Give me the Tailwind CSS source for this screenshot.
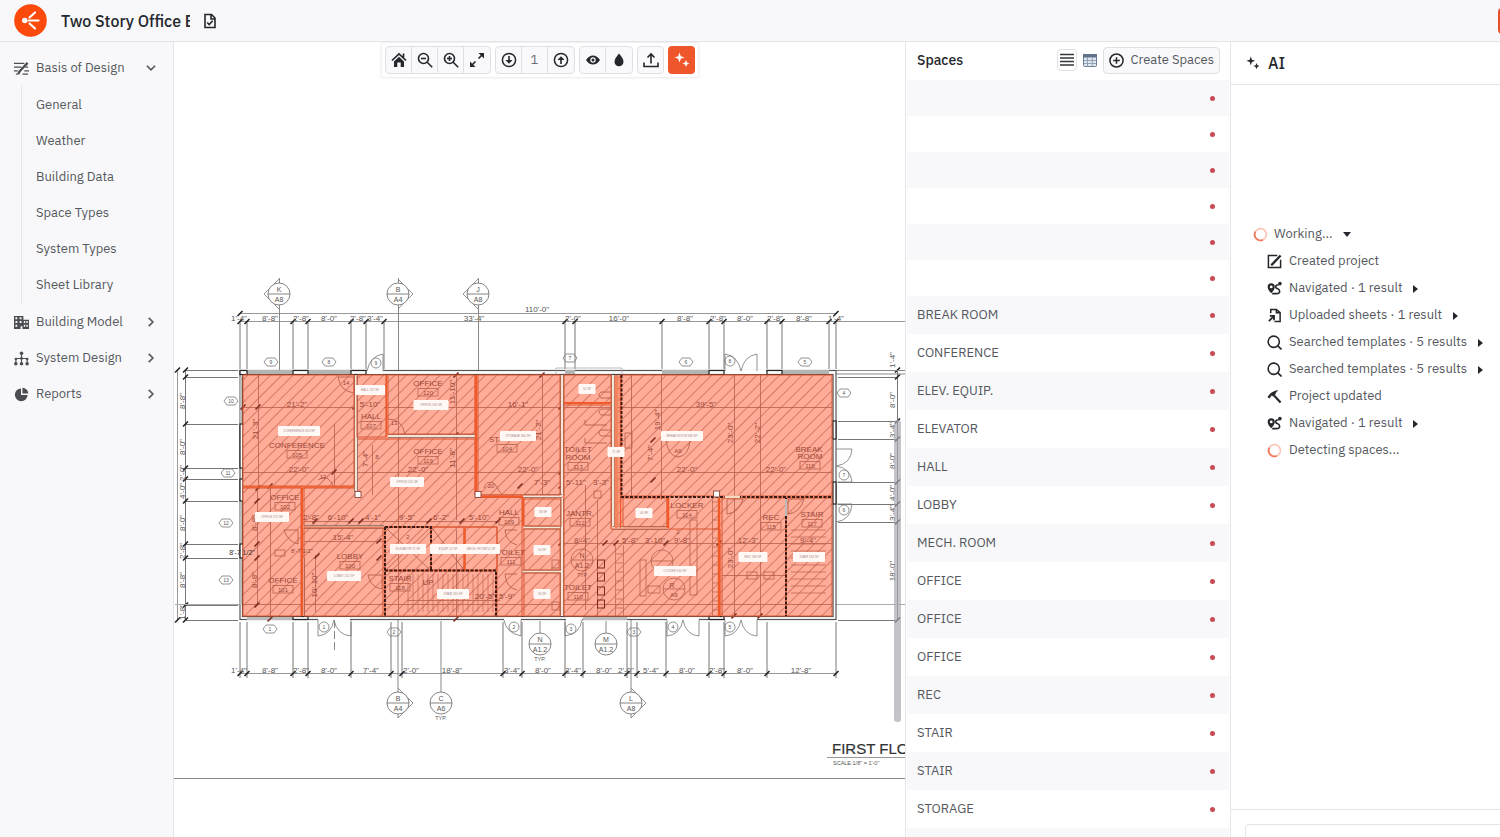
<!DOCTYPE html>
<html lang="en">
<head>
    <meta charset="UTF-8">
    <meta name="viewport" content="width=device-width, initial-scale=1.0">
    <title>Two Story Office Building</title>
    <script src="https://cdn.jsdelivr.net/npm/@tailwindcss/browser@4"></script>
    <style>
        body { font-family: 'IBM Plex Sans', Roboto, sans-serif; }
        #plan text { font-family: 'Liberation Sans', Arial, sans-serif; text-anchor: middle; }
    </style>
</head>
<body class="flex h-screen flex-col overflow-hidden bg-white text-sm text-[#55585e]">

    <!-- Icons -->
    <svg class="hidden">
        <symbol id="i-chevron" viewBox="0 0 16 16"><path d="M5 2.500 10.500 8 5 13.500" fill="none" stroke="currentColor" stroke-width="2.200"/></symbol>
        <symbol id="i-sparkles" viewBox="0 0 16 16"><path fill="currentColor" d="M5.500.5 6.800 4.200 10.500 5.500 6.800 6.800 5.500 10.500 4.200 6.800.5 5.500 4.200 4.200zM12 8l1 2.500 2.500 1-2.500 1-1 2.500-1-2.500-2.500-1 2.500-1z"/></symbol>
        <symbol id="i-search" viewBox="0 0 16 16"><g fill="none" stroke="currentColor" stroke-width="1.700"><circle cx="7.200" cy="7.200" r="6"/><path d="m11 11 4.500 4.500"/></g></symbol>
        <symbol id="i-zoom" viewBox="0 0 16 16"><g fill="none" stroke="currentColor" stroke-width="1.600"><circle cx="6.500" cy="6.500" r="5"/><path d="m10.200 10.200 5 5"/><path d="M4 6.500h5"/></g></symbol>
        <symbol id="i-route" viewBox="0 0 16 16"><path fill="currentColor" fill-rule="evenodd" d="M4.500 2.500A3.800 3.800 0 0 0 .7 6.300C.7 9 3 11.500 4.500 13c1.500-1.500 3.800-4 3.800-6.700a3.800 3.800 0 0 0-3.800-3.800zm0 2.300a1.500 1.500 0 1 1 0 3 1.500 1.500 0 0 1 0-3z"/><circle cx="13.800" cy="2.800" r="1.900" fill="currentColor"/><path d="M12.500 4c-4 0-4 3.500-1.500 4s4.500 5.500-1 5.500H5.500" fill="none" stroke="currentColor" stroke-width="1.700"/></symbol>
        <symbol id="i-spinner" viewBox="0 0 16 16"><circle cx="8" cy="8" r="6.300" fill="none" stroke="#fbc5b5" stroke-width="1.800"/><path d="M10.500 13.800A6.300 6.300 0 0 1 2.500 5" fill="none" stroke="#f0785a" stroke-width="1.800"/></symbol>
    </svg>

    <header class="flex h-[42px] shrink-0 items-center border-b border-[#e4e5e9] bg-[#f8f8fa]">
        <a href="#" aria-label="Home" class="ml-[14px]">
            <svg class="size-[33px]" viewBox="0 0 33 33"><circle cx="16.500" cy="16.500" r="16.300" fill="#fb4a0c"/><circle cx="10.800" cy="16.500" r="2.800" fill="#fff"/><path d="M15.500 13.500l5.500-5M15 16.500h9.500M15.500 19.500l5.500 5" stroke="#fff" stroke-width="2.200" stroke-linecap="round"/></svg>
        </a>
        <input aria-label="Project name" value="Two Story Office Building" class="ml-[14px] w-[129px] bg-transparent text-base font-medium text-[#24272c] outline-none">
        <button aria-label="Project files" class="ml-3 text-[#24272c]">
            <svg class="size-4" viewBox="0 0 16 16" fill="none" stroke="currentColor" stroke-width="1.600"><path d="M3 1.500h6.500L13 5v9.500H3zM9 1.500V6h4"/><path d="m5.200 9.500 2 2 3.500-3.700"/></svg>
        </button>
        <button aria-label="Share" class="-mr-7 ml-auto h-[26px] w-[30px] shrink-0 rounded bg-[#e8502a]"></button>
    </header>

    <div class="flex min-h-0 flex-1">
        <nav class="w-[174px] shrink-0 border-r border-[#e4e5e9] bg-[#f8f8fa] pt-2 text-[13px]">
            <button class="flex h-9 w-full items-center gap-[7px] pr-4 pl-[14px]">
                <svg class="size-[15px] text-[#4a4d52]" viewBox="0 0 16 16" fill="none" stroke="currentColor" stroke-width="1.500"><path d="M0 2.500h11M0 6.500h8M0 10.500h4M11 10.500h5M2 14h2M9 14h6M12 6.500h3"/><path d="m14.500 2-8.500 9-1.500 3" stroke-width="2.500"/></svg>
                Basis of Design
                <svg class="ml-auto size-3 rotate-90"><use href="#i-chevron"/></svg>
            </button>
            <ul class="ml-[21px] border-l border-[#e4e5e9] py-px">
                <li><a href="#" class="flex h-9 items-center pl-[14px]">General</a></li>
                <li><a href="#" class="flex h-9 items-center pl-[14px]">Weather</a></li>
                <li><a href="#" class="flex h-9 items-center pl-[14px]">Building Data</a></li>
                <li><a href="#" class="flex h-9 items-center pl-[14px]">Space Types</a></li>
                <li><a href="#" class="flex h-9 items-center pl-[14px]">System Types</a></li>
                <li><a href="#" class="flex h-9 items-center pl-[14px]">Sheet Library</a></li>
            </ul>
            <button class="flex h-9 w-full items-center gap-[7px] pr-4 pl-[14px]">
                <svg class="size-[15px] text-[#4a4d52]" viewBox="0 0 16 16"><path fill="currentColor" fill-rule="evenodd" d="M0 1h10v4h6v10H9v-3H7v3H0zM1.500 2.500v2h2v-2zM6 2.500v2h2v-2zM1.500 6.500v2h2v-2zM6 6.500v2h2v-2zM1.500 10.500v2h2v-2zM10.500 6.500v2h1.500v-2zM13.200 6.500v2h1.500v-2zM10.500 10.500v2h1.500v-2zM13.200 10.500v2h1.500v-2z"/></svg>
                Building Model
                <svg class="ml-auto size-3"><use href="#i-chevron"/></svg>
            </button>
            <button class="flex h-9 w-full items-center gap-[7px] pr-4 pl-[14px]">
                <svg class="size-[15px] text-[#4a4d52]" viewBox="0 0 16 16" fill="currentColor"><path d="M8 2v11M2 13V8h12v5" fill="none" stroke="currentColor" stroke-width="1.200"/><circle cx="8" cy="2.500" r="1.900"/><circle cx="2" cy="8.500" r="1.400"/><circle cx="14" cy="8.500" r="1.400"/><circle cx="8" cy="8" r="1.500"/><circle cx="1.900" cy="13.500" r="1.900"/><circle cx="8" cy="13.500" r="1.900"/><circle cx="14" cy="13.500" r="1.900"/></svg>
                System Design
                <svg class="ml-auto size-3"><use href="#i-chevron"/></svg>
            </button>
            <button class="flex h-9 w-full items-center gap-[7px] pr-4 pl-[14px]">
                <svg class="size-[15px] text-[#4a4d52]" viewBox="0 0 16 16" fill="currentColor"><path d="M7.500 1.500v7h7A6.800 6.800 0 1 1 7.500 1.500z"/><path d="M9 .8A6.500 6.500 0 0 1 15.200 7H9z"/></svg>
                Reports
                <svg class="ml-auto size-3"><use href="#i-chevron"/></svg>
            </button>
        </nav>

        <main class="relative min-w-0 flex-1 overflow-hidden">
            <svg id="plan" class="h-[795px] w-[731px]" viewBox="174 42 731 795" role="img" aria-label="First floor plan"></svg>

            <div class="absolute top-1 left-[211px] flex h-7 gap-1 text-[#24272c] shadow-[0_0_0_3px_#fff,0_0_2px_4px_#e9eaed]">
                <div class="flex divide-x divide-[#dfe0e4] rounded border border-[#dfe0e4] bg-[#f9f9fb]">
                    <button aria-label="Fit" class="flex w-[26px] items-center justify-center"><svg class="size-4" viewBox="0 0 16 16"><path d="M1 8.500 8 2l7 6.500M12.500 1.500v4" fill="none" stroke="currentColor" stroke-width="1.700"/><path d="M8 4.800 13 9.500V15H9.700v-4.500H6.300V15H3V9.500z" fill="currentColor"/></svg></button>
                    <button aria-label="Zoom out" class="flex w-[26px] items-center justify-center"><svg class="size-4"><use href="#i-zoom"/></svg></button>
                    <button aria-label="Zoom in" class="flex w-[26px] items-center justify-center"><svg class="size-4" viewBox="0 0 16 16"><use href="#i-zoom"/><path d="M6.500 4v5" stroke="currentColor" stroke-width="1.600"/></svg></button>
                    <button aria-label="Full screen" class="flex w-[26px] items-center justify-center"><svg class="size-4" viewBox="0 0 16 16" fill="currentColor"><path d="M9.500 1H15v5.500zM1 9.500V15h5.500z"/><path d="m13 3-3.500 3.500M6.500 9.500 3 13" stroke="currentColor" stroke-width="1.600"/></svg></button>
                </div>
                <div class="flex divide-x divide-[#dfe0e4] rounded border border-[#dfe0e4] bg-[#f9f9fb]">
                    <button aria-label="Previous sheet" class="flex w-[26px] items-center justify-center"><svg class="size-4" viewBox="0 0 16 16"><circle cx="8" cy="8" r="6.600" fill="none" stroke="currentColor" stroke-width="1.500"/><path d="M7.200 4h1.600v4h2.700L8 11.800 4.500 8h2.700z" fill="currentColor"/></svg></button>
                    <span class="flex w-[26px] items-center justify-center text-[13px] text-[#6a6d73]">1</span>
                    <button aria-label="Next sheet" class="flex w-[26px] items-center justify-center"><svg class="size-4 rotate-180" viewBox="0 0 16 16"><circle cx="8" cy="8" r="6.600" fill="none" stroke="currentColor" stroke-width="1.500"/><path d="M7.200 4h1.600v4h2.700L8 11.800 4.500 8h2.700z" fill="currentColor"/></svg></button>
                </div>
                <div class="flex divide-x divide-[#dfe0e4] rounded border border-[#dfe0e4] bg-[#f9f9fb]">
                    <button aria-label="Visibility" class="flex w-[26px] items-center justify-center"><svg class="size-4" viewBox="0 0 16 16"><path fill="currentColor" fill-rule="evenodd" d="M1 8c2-3 4.300-4.500 7-4.500S13 5 15 8c-2 3-4.300 4.500-7 4.500S3 11 1 8zm7-2.700a2.700 2.700 0 1 0 0 5.400 2.700 2.700 0 0 0 0-5.400z"/><circle cx="8" cy="8" r="1.500" fill="currentColor"/></svg></button>
                    <button aria-label="Opacity" class="flex w-[26px] items-center justify-center"><svg class="size-4" viewBox="0 0 16 16"><path fill="currentColor" d="M8 1.500c2 2.700 4.500 5.300 4.500 8.200a4.500 4.500 0 0 1-9 0C3.500 6.800 6 4.200 8 1.500z"/></svg></button>
                </div>
                <button aria-label="Upload" class="flex w-[27px] items-center justify-center rounded border border-[#dfe0e4] bg-[#f9f9fb]"><svg class="size-4" viewBox="0 0 16 16" fill="none" stroke="currentColor" stroke-width="1.600"><path d="M1 10.500v4h14v-4M8 11.500V2M4.500 5.500 8 2l3.500 3.500"/></svg></button>
                <button aria-label="AI detect" class="flex w-[27px] items-center justify-center rounded bg-[#f0562c] text-white"><svg class="size-4"><use href="#i-sparkles"/></svg></button>
            </div>
        </main>

        <section class="flex w-[326px] shrink-0 flex-col border-x border-[#e4e5e9]">
            <div class="flex h-[38px] shrink-0 items-center pr-[10px] pb-0.5 pl-[11px]">
                <h2 class="mr-auto text-sm font-medium text-[#24272c]">Spaces</h2>
                <button aria-label="List view" class="mr-[3px] flex h-[22px] w-5 items-center justify-center rounded-sm border border-[#dfe0e4] text-[#35383d]"><svg class="h-[14px] w-[14px]" viewBox="0 0 14 14"><path d="M0 1.500h14M0 5h14M0 8.500h14M0 12h14" stroke="currentColor" stroke-width="1.600"/></svg></button>
                <button aria-label="Table view" class="mr-[3px] flex h-[22px] w-5 items-center justify-center"><svg class="h-[13px] w-[14px]" viewBox="0 0 14 13"><rect x=".5" y=".5" width="13" height="12" rx="1" fill="#dfe6ef" stroke="#6d7f97"/><path d="M0 0h14v3.500H0z" fill="#61738c"/><path d="M4.500 3v9.500M9.300 3v9.500M1 6.500h12M1 9.500h12" stroke="#8c9cb2" stroke-width=".9"/></svg></button>
                <button class="flex h-[27px] items-center gap-1.5 rounded border border-[#dfe0e4] bg-[#f9f9fb] px-[5px] text-[13px]"><svg class="size-[15px] text-[#24272c]" viewBox="0 0 16 16" fill="none" stroke="currentColor" stroke-width="1.600"><circle cx="8" cy="8" r="7"/><path d="M8 4.500v7M4.500 8h7"/></svg>Create Spaces</button>
            </div>
            <ul id="spaces" class="min-h-0 flex-1 overflow-hidden pr-px pl-px text-[13px]"></ul>
        </section>

        <aside class="flex w-[269px] shrink-0 flex-col overflow-hidden">
            <h2 class="flex h-[43px] shrink-0 items-center gap-2 border-b border-[#e4e5e9] pl-[15px] text-base font-medium text-[#24272c]"><svg class="size-[14px]"><use href="#i-sparkles"/></svg>AI</h2>
            <div class="flex-1 pt-[136px] pl-[22px] text-[13px]">
                <button class="flex h-[27px] items-center gap-1.5"><svg class="size-[15px]"><use href="#i-spinner"/></svg>Working...<svg class="ml-1 h-[5px] w-2" viewBox="0 0 8 5"><path d="M0 0h8L4 5z" fill="#24272c"/></svg></button>
                <ul id="steps" class="pl-[14px]"></ul>
            </div>
            <div class="h-7 shrink-0 border-t border-[#e4e5e9] pt-[14px] pl-[14px]">
                <textarea aria-label="Message" class="h-16 w-[300px] resize-none rounded border border-[#e4e5e9]"></textarea>
            </div>
        </aside>
    </div>

    <script>
        // Spaces list, unnamed spaces come first
        const spaces = ['', '', '', '', '', '', 'BREAK ROOM', 'CONFERENCE', 'ELEV. EQUIP.', 'ELEVATOR', 'HALL', 'LOBBY', 'MECH. ROOM',
            'OFFICE', 'OFFICE', 'OFFICE', 'REC', 'STAIR', 'STAIR', 'STORAGE', ''];
        document.getElementById('spaces').innerHTML = spaces.map(name => `
            <li class="flex ${name ? 'h-[38px]' : 'h-9'} items-center justify-between pr-[14px] pl-[10px] odd:bg-[#f8f8fa]">
                <span>${name}</span><span class="size-[5px] rounded-full bg-[#c94a55]"></span>
            </li>`).join('');

        // AI activity log
        const icons = {
            edit: '<svg class="size-[15px]" viewBox="0 0 16 16" fill="none" stroke="currentColor" stroke-width="1.600"><path d="M11 1.500H1.500v13h13V6"/><path d="m14.500 1.500-8 8.500-2 2" stroke-width="2.400"/></svg>',
            route: '<svg class="size-[15px]"><use href="#i-route"/></svg>',
            upload: '<svg class="size-[15px]" viewBox="0 0 16 16" fill="none" stroke="currentColor" stroke-width="1.600"><path d="M4 5.500v-4h6L14 5v9.500H8M10 1.500V5h4"/><path d="m2 14 5-5M3 8.500h4.500V13" stroke-width="1.900"/></svg>',
            search: '<svg class="size-[15px]"><use href="#i-search"/></svg>',
            hammer: '<svg class="size-[15px]" viewBox="0 0 16 16"><path d="M.5 8.500C3 5 6 1.500 12.500 1.300 10.500 2.500 9.500 3.800 9 5.500L6.500 8 5 7 2.500 10z" fill="currentColor"/><path d="m7.500 7 7 7.500" stroke="currentColor" stroke-width="2.300"/></svg>',
            spinner: '<svg class="size-[15px]"><use href="#i-spinner"/></svg>'
        };
        const steps = [
            ['edit', 'Created project', 0],
            ['route', 'Navigated · 1 result', 1],
            ['upload', 'Uploaded sheets · 1 result', 1],
            ['search', 'Searched templates · 5 results', 1],
            ['search', 'Searched templates · 5 results', 1],
            ['hammer', 'Project updated', 0],
            ['route', 'Navigated · 1 result', 1],
            ['spinner', 'Detecting spaces...', 0]
        ];
        document.getElementById('steps').innerHTML = steps.map(([icon, label, more]) => `
            <li class="flex h-[27px] items-center gap-[7px] whitespace-nowrap"><span class="text-[#24272c]">${icons[icon]}</span>${label}
                ${more ? '<button aria-label="Show results" class="ml-1"><svg class="h-2 w-[5px]" viewBox="0 0 5 8"><path d="M0 0v8l5-4z" fill="#24272c"/></svg></button>' : ''}
            </li>`).join('');

        // Floor plan
        const out = [];
        const line = (x1, y1, x2, y2, c = '#888', w = 1, extra = '') => out.push(`<path d="M${x1} ${y1}L${x2} ${y2}" stroke="${c}" stroke-width="${w}" fill="none" ${extra}/>`);
        const path = (d, c = '#777', w = 0.8, extra = '') => out.push(`<path d="${d}" stroke="${c}" stroke-width="${w}" fill="none" ${extra}/>`);
        const rect = (x1, y1, x2, y2, fill, c = 'none', w = 1, extra = '') => out.push(`<rect x="${x1}" y="${y1}" width="${x2 - x1}" height="${y2 - y1}" fill="${fill}" stroke="${c}" stroke-width="${w}" ${extra}/>`);
        const text = (s, x, y, size = 8, c = '#555', rot = 0) => out.push(`<text x="${x}" y="${y}" font-size="${size}" fill="${c}"${rot ? ` transform="rotate(-90 ${x} ${y})"` : ''}>${s}</text>`);
        const tick = (x, y, c = '#222') => line(x - 2.5, y + 2.5, x + 2.5, y - 2.5, c, 1.6);
        const hex = (n, x, y) => { path(`M${x - 7} ${y}l3-4h8l3 4l-3 4h-8z`); text(n, x, y + 2, 5); };
        const tag = (n, x, y) => { out.push(`<circle cx="${x}" cy="${y}" r="5" fill="none" stroke="#777" stroke-width=".8"/>`); text(n, x, y + 2, 5); };

        // Dimension strings
        const ink = '#777';
        line(240, 313.5, 836, 313.5, '#999'); tick(240, 313.5); tick(836, 313.5);
        line(240, 321.5, 905, 321.5, '#999');
        [240, 247, 293, 308, 351, 366, 384, 565, 575, 662, 709, 724, 767, 782, 829, 836].forEach(x => { line(x, 322, x, 369, ink); tick(x, 321.5); });
        [["1'-4\"", 239], ["8'-8\"", 270], ["2'-8\"", 301], ["8'-0\"", 329], ["2'-8\"", 358], ["3'-4\"", 375], ["33'-4\"", 474], ["2'-0\"", 573], ["16'-0\"", 619], ["8'-8\"", 685], ["2'-8\"", 718], ["8'-0\"", 745], ["2'-8\"", 775], ["8'-8\"", 804], ["1'-4\"", 836]].forEach(([s, x]) => text(s, x, 321));
        text("110'-0\"", 537, 312);
        line(240, 673.5, 836, 673.5, '#999');
        [240, 247, 293, 308, 351, 391, 402, 503, 522, 565, 583, 627, 637, 666, 709, 724, 767, 836].forEach(x => { line(x, 622, x, 678, ink); tick(x, 673.5); });
        [["1'-4\"", 239], ["8'-8\"", 270], ["2'-8\"", 301], ["8'-0\"", 329], ["7'-4\"", 371], ["2'-0\"", 411], ["18'-8\"", 452], ["3'-4\"", 512], ["8'-0\"", 543], ["3'-4\"", 573], ["8'-0\"", 604], ["2'-0\"", 626], ["5'-4\"", 651], ["8'-0\"", 687], ["2'-8\"", 717], ["8'-0\"", 745], ["12'-8\"", 801]].forEach(([s, x]) => text(s, x, 673));
        line(185.5, 370, 185.5, 620, ink); line(177.5, 370, 177.5, 620, '#999'); tick(177.5, 370); tick(177.5, 620);
        [370, 377, 424, 468, 479, 501, 544, 558, 605, 620].forEach(y => { line(185, y + .5, 238, y + .5, ink); tick(185.5, y); });
        [["8'-8\"", 401], ["8'-0\"", 447], ["2'-0\"", 473], ["4'-0\"", 491], ["8'-0\"", 523], ["2'-8\"", 551], ["8'-8\"", 580], ["1'-8\"", 612]].forEach(([s, y]) => text(s, 185, y, 8, '#555', 1));
        line(897.5, 370, 897.5, 620, ink);
        [370, 377, 421, 439, 482, 504, 522, 620].forEach(y => { line(838, y + .5, 897, y + .5, ink); tick(897.5, y); });
        [["1'-4\"", 360], ["8'-0\"", 400], ["3'-4\"", 430], ["8'-0\"", 461], ["4'-0\"", 493], ["3'-4\"", 513], ["18'-0\"", 571]].forEach(([s, y]) => text(s, 895, y, 8, '#555', 1));
        line(175, 604.5, 905, 604.5, '#aaa');
        line(836, 374, 905, 374); line(836, 370.5, 905, 370.5);

        // Section markers
        const marker = (a, b, x, y, dir, typ) => {
            if (dir) path(`M${x} ${y - 15}L${x + 15 * dir} ${y}L${x} ${y + 15}`);
            out.push(`<circle cx="${x}" cy="${y}" r="11" fill="#fff" stroke="#777" stroke-width=".9"/>`);
            line(x - 11, y, x + 11, y, '#777', .9);
            text(a, x, y - 2, 7); text(b, x, y + 8, 7);
            if (typ) text('TYP.', x, y + 17, 5.5);
        };
        line(279.5, 278, 279.5, 385); line(398.5, 278, 398.5, 616); line(478.5, 278, 478.5, 375);
        line(540, 621, 540, 633); line(606, 621, 606, 633); line(441, 621, 441, 692); line(398, 618, 398, 718); line(631, 608, 631, 692);
        line(631, 714, 631, 718);
        marker('K', 'A8', 279, 294, -1); marker('B', 'A4', 398, 294, 1); marker('J', 'A8', 478, 294, -1);
        marker('N', 'A1.2', 540, 644, 0, 1); marker('M', 'A1.2', 606, 644, 0);
        marker('B', 'A4', 398, 703, 1); marker('C', 'A6', 441, 703, 0, 1); marker('L', 'A8', 631, 703, 1);

        [[9, 271, 362], [8, 329, 362], [7, 570, 358], [6, 686, 362], [5, 805, 362], [10, 231, 401], [11, 228, 473], [12, 226, 523], [13, 226, 580], [4, 844, 393], [1, 270, 629], [2, 394, 632], [3, 634, 632]].forEach(t => hex(...t));
        [[9, 376, 363], [8, 730, 361], [7, 844, 475], [6, 844, 510], [1, 324, 627], [2, 514, 627], [3, 571, 629], [4, 673, 627], [5, 730, 627]].forEach(t => tag(...t));

        // Exterior walls
        rect(240, 370.5, 836, 619.5, '#fff', '#555', 1.2);
        rect(242.5, 374.5, 833, 616.5, '#fff', '#444', 1.2);
        [[247, 293], [308, 351], [565, 575], [662, 709], [782, 829]].forEach(([a, b]) => rect(a, 370, b, 374, '#b4b4b4'));
        [[247, 293], [583, 627]].forEach(([a, b]) => rect(a, 617, b, 620, '#bbb'));
        [[377, 424], [501, 544], [558, 605]].forEach(([a, b]) => rect(239.5, a, 242, b, '#bbb'));
        [[240, 247], [293, 308], [351, 366], [709, 724], [767, 782]].forEach(([a, b]) => rect(a, 370.5, b, 374.5, '#fff', '#222', 1.2));
        [[293, 308], [709, 724]].forEach(([a, b]) => rect(a, 616.5, b, 619.5, '#fff', '#222', 1.2));
        [[424, 468], [479, 501], [544, 558]].forEach(([a, b]) => rect(240, a, 243, b, '#fff', '#222', 1.2));
        [[421, 439], [482, 504]].forEach(([a, b]) => rect(833, a, 836, b, '#fff', '#222', 1.2));
        [[367, 383], [725, 766]].forEach(([a, b]) => rect(a, 369.5, b, 374, '#fff'));
        [[318, 350], [504, 521], [566, 582], [667, 699], [725, 757]].forEach(([a, b]) => rect(a, 617.5, b, 621, '#fff'));

        // Doors
        path('M383 371V354Q370 356 367 371M725 371V354Q738 356 741 371Q744 356 757 354V371M318 620V636Q331 635 334 620Q337 635 351 636V620M504 620Q506 633 521 636V620M565 620V636Q580 634 582 620'
            + 'M667 620V636Q680 635 683 620Q686 635 699 636V620M725 620V636Q738 635 741 620Q744 635 757 636V620M836 449H852Q851 464 836 466Q851 468 852 482H836M836 504H852Q851 520 836 522');
        line(334.5, 620, 334.5, 652, '#888', 1, 'stroke-dasharray="8 3"');

        // Room fills and hatching
        out.push('<defs><pattern id="hatch" width="8" height="8" patternUnits="userSpaceOnUse" patternTransform="rotate(45)"><path d="M.5 0V8" stroke="#cf735f" stroke-width=".9"/></pattern></defs>');
        rect(243, 375, 832, 616, '#ffad99');
        rect(243, 375, 832, 616, 'url(#hatch)');

        // Drawing lines showing through the fill
        const dark = '#b9604d';
        [[243, 407, 358], [384, 407, 832], [243, 472, 832], [304, 521, 500], [304, 541, 384], [560, 543, 832], [243, 604, 832], [407, 600, 500], [722, 575, 786]].forEach(([a, y, b]) => line(a, y + .5, b, y + .5, dark, .8));
        [[258, 375, 488], [334, 424, 488], [270, 488, 616], [257, 488, 605], [456, 375, 520], [542, 375, 495], [398, 375, 616], [631, 375, 498], [661, 375, 500], [734, 375, 616], [760, 375, 616], [315, 555, 612], [372, 445, 495], [585, 485, 610], [597, 500, 616], [456, 530, 616]].forEach(([x, a, b]) => line(x + .5, a, x + .5, b, dark, .8));
        [[258, 407], [243, 407], [355, 407], [561, 407], [456, 435], [456, 375], [542, 375], [334, 472], [270, 486], [258, 488], [561, 472], [520, 486], [561, 486], [429, 521], [462, 521], [498, 521], [315, 521], [351, 521], [361, 521], [561, 543], [605, 543], [616, 543], [666, 543], [719, 543], [257, 501], [257, 544], [257, 558], [257, 605], [317, 556], [379, 541], [379, 558], [653, 440], [653, 480], [734, 616], [760, 616], [270, 619], [456, 619]].forEach(([x, y]) => tick(x, y, '#7a2c20'));
        for (let x = 408; x < 496; x += 5) line(x, 574, x, 612, dark, .6);
        for (let y = 530; y < 598; y += 7) line(791, y, 826, y, dark, .7);
        for (let y = 502; y < 614; y += 9) line(712, y, 719, y, dark, .7);
        for (let y = 554; y < 614; y += 9) line(616, y, 623, y, dark, .7);
        line(712.5, 498, 712.5, 616, dark, .7); line(623.5, 545, 623.5, 616, dark, .7); line(615.5, 545, 615.5, 616, dark, .7);
        [560, 573, 587, 600].forEach(y => rect(597.5, y, 604.5, y + 8, 'none', '#7a2c20', 1));
        [[594, 491, 601, 498], [552, 560, 559, 568], [552, 602, 559, 610], [690, 520, 697, 595], [625, 433, 632, 448], [640, 560, 646, 596], [275, 550, 285, 556], [747, 572, 757, 579], [764, 572, 774, 579], [648, 586, 660, 593]].forEach(r => rect(...r, 'none', dark, .8));
        path('M585 420v5h22M585 438v5h22M611 392h-10q-4 3 0 6h10M611 409h-10q-4 3 0 6h10M611 430h-10q-4 3 0 6h10M386 528l44 42M386 570l44-42M432 528l32 42M338 377h16v16q-14-2-16-16M388 419q14 0 17 15M318 480q10-8 16 8M284 530h14v14q-10-2-14-14M368 575h14v14q-12-2-14-14M484 488q2-8 10-5l8 12M517 530h-12q1 12 12 15M517 574h-12q1 14 12 16M727 514v-15h16q-4 14-16 15M788 514v-15h16q-4 14-16 15M666 440q2 16 12 17 11-1 12-17z', dark, .9);
        [[582, 560], [662, 561], [674, 589]].forEach(([x, y]) => { out.push(`<circle cx="${x}" cy="${y}" r="11" fill="none" stroke="${dark}" stroke-width=".8"/>`); line(x - 11, y, x + 11, y, dark, .8); });

        // Interior walls
        const wall = (x1, y1, x2, y2) => { line(x1, y1, x2, y2, '#7d675c', 3.6); line(x1, y1, x2, y2, '#f3e6d8', 2); };
        wall(356, 375, 356, 492); wall(562, 375, 562, 496); wall(388, 436, 475, 436); wall(613, 375, 613, 526);
        wall(524, 527.5, 563, 527.5); wall(562, 498, 562, 616); wall(522, 571.5, 561, 571.5); wall(304, 527, 384, 527);
        wall(303, 558, 303, 616); wall(613, 528, 668, 528); wall(523, 496, 562, 496);

        // Room outlines
        const or = '#f05a2a';
        [[243, 375, 354, 486], [357, 375, 386, 437], [388, 375, 475, 434], [478, 375, 560, 495], [564, 375, 611, 403], [621, 375, 832, 496], [243, 488, 301, 616], [304, 528, 383, 616], [385, 527, 431, 570], [431, 527, 464, 570], [465, 527, 497, 570], [385, 571, 496, 616], [524, 499, 561, 526], [524, 529, 560, 570], [524, 573, 560, 616], [623, 498, 667, 527], [722, 498, 786, 616], [786, 498, 832, 616]].forEach(r => rect(...r, 'none', '#dc5733', 1));
        path('M358 439H475V495H522V616H497V527H304V488H354M564 405H611V529H720V616H564z', '#dc5733', 1);
        line(302, 488, 302, 616, or, 2); line(386.5, 375, 386.5, 437, or, 1.5); line(476, 375, 476, 495, or, 2.5); line(476, 497, 523, 497, or, 2);
        line(564, 403, 611, 403, or, 2); line(616.5, 375, 616.5, 528, '#f5835e', 4); line(620.5, 375, 620.5, 528, or, 1.5);
        line(668, 498, 668, 528, or, 2.5); line(719, 498, 719, 616, or, 2.5); line(464.5, 527, 464.5, 570, or, 2); line(523, 497, 523, 526, or, 2); line(243, 487, 354, 487, or, 1.5);
        path('M621.5 375V497H832M786 498V616M385 527V616M385 527H431V570M385 570.5H496V616', '#3a1a14', 2, 'stroke-dasharray="3 1.5"');
        rect(725, 495.5, 740, 498, '#f3d8c4');
        rect(785, 499, 787, 516, '#bbb');
        [[358, 494.5], [478, 494.5], [716.5, 494]].forEach(([x, y]) => rect(x - 3, y - 3, x + 3, y + 3, '#fff', '#9a5040', 1));
        path('M556 374v-6h66v6', '#aaa', .8);

        // Room names
        const brown = '#9a4638';
        [['CONFERENCE', 297, 448, 105], ['HALL', 371, 419, 107], ['OFFICE', 428, 386, 120], ['OFFICE', 428, 454, 119], ['ST', 494, 442, 104], ['OFFICE', 285, 500, 102], ['OFFICE', 283, 583, 101], ['LOBBY', 350, 559, 100], ['HALL', 509, 515, 109], ['ROOM', 578, 460, 113], ['JANTR.', 580, 516, 112], ['TOILET', 578, 590, 110], ['TOILET', 511, 555, 111], ['LOCKER', 687, 508, 114], ['REC', 771, 520, 115], ['STAIR', 812, 517, 117], ['ROOM', 810, 459, 116], ['STAIR', 400, 581, 118]].forEach(([s, x, y, n]) => {
            text(s, x, y, 8, brown);
            const nx = s === 'ST' ? 507 : x;
            rect(nx - 10, y + 2.5, nx + 10, y + 10, 'none', dark, .8); text(n, nx, y + 9, 6, brown);
        });
        text('TOILET', 578, 452, 8, brown); text('BREAK', 809, 452, 8, brown); text('UP', 428, 585, 8, brown);
        text('N', 582, 558, 7, brown); text('A1.2', 582, 568, 7, brown); text('TYP', 582, 577, 5, brown); text('R', 672, 588, 7, brown); text('A9', 674, 597, 6, brown); text('A9', 678, 453, 6, brown);
        [["21'-2\"", 297, 407], ["5'-10\"", 370, 407], ["16'-1\"", 518, 407], ["39'-5\"", 706, 407], ["22'-0\"", 299, 472], ["22'-0\"", 418, 472], ["22'-0\"", 528, 472], ["22'-0\"", 687, 472], ["22'-0\"", 776, 472], ["7'-3\"", 542, 485], ["5'-11\"", 576, 485], ["3'-3\"", 601, 485], ["2'-8\"", 311, 520], ["6'-10\"", 338, 520], ["4'-1\"", 373, 520], ["9'-5\"", 407, 520], ["6'-2\"", 441, 520], ["5'-10\"", 479, 520], ["15'-4\"", 343, 540], ["8'-4\"", 582, 543], ["5'-8\"", 630, 543], ["3'-10\"", 655, 543], ["9'-8\"", 682, 543], ["12'-3\"", 748, 543], ["9'-4\"", 808, 543], ["20'-5\"", 485, 599], ["5'-9\"", 507, 599]].forEach(([s, x, y]) => text(s, x, y, 8, brown));
        [["21'-3\"", 258, 429], ["11'-10\"", 455, 392], ["11'-8\"", 455, 458], ["21'-2\"", 541, 430], ["19'-4\"", 660, 420], ["7'-4\"", 653, 453], ["23'-0\"", 733, 433], ["22'-2\"", 760, 433], ["8'-8\"", 257, 523], ["8'-8\"", 257, 580], ["10'-10\"", 317, 585], ["23'-0\"", 733, 558], ["7'-4\"", 368, 459]].forEach(([s, x, y]) => text(s, x, y, 8, brown, 1));
        text("8'-7 1/2\"", 242, 555, 7, '#333'); text("8'-7 1/2\"", 302, 553, 6, brown);
        [[14, 346, 385], [12, 323, 479], [8, 377, 459], [13, 394, 425], [20, 491, 488], [2, 408, 539], [2, 678, 534]].forEach(([n, x, y]) => text(n, x, y, 6, brown));

        // Detected space labels
        [['CONFERENCE 453 SF', 299, 431, 42], ['HALL 107 SF', 370, 390, 30], ['OFFICE 190 SF', 431, 405, 35], ['STORAGE 360 SF', 518, 436, 36], ['52 SF', 587, 389, 17], ['71 SF', 616, 452, 17], ['BREAK ROOM 948 SF', 682, 436, 42], ['OFFICE 242 SF', 407, 482, 34], ['OFFICE 270 SF', 272, 517, 34], ['LOBBY 252 SF', 344, 576, 34], ['ELEVATOR 71 SF', 408, 549, 36], ['EQUIP. 52 SF', 448, 549, 36], ['MECH. ROOM 52 SF', 481, 549, 38], ['38 SF', 543, 512, 17], ['54 SF', 542, 550, 17], ['56 SF', 542, 594, 17], ['STAIR 184 SF', 453, 594, 32], ['46 SF', 644, 513, 17], ['LOCKER 810 SF', 675, 571, 42], ['REC 269 SF', 753, 557, 29], ['STAIR 194 SF', 809, 557, 32]].forEach(([s, x, y, w]) => {
            rect(x - w / 2, y - 5, x + w / 2, y + 5, '#fff8f5', 'none', 0, 'rx="1"');
            text(s, x, y + 1, 3, '#a88');
        });

        // Sheet title and scroll bar
        rect(894, 420, 901, 722, '#a9a9b2', 'none', 0, 'rx="3" opacity=".7"');
        out.push('<text x="832" y="754" font-size="15" fill="#333" stroke="#333" stroke-width=".2" style="text-anchor:start">FIRST FLOOR PLAN</text>');
        line(827, 757.5, 905, 757.5, '#999');
        out.push('<text x="833" y="765" font-size="5.5" fill="#555" style="text-anchor:start">SCALE:1/8" = 1\'-0"</text>');
        line(174, 778.5, 905, 778.5, '#888');

        document.getElementById('plan').innerHTML = out.join('');
    </script>
</body>
</html>
